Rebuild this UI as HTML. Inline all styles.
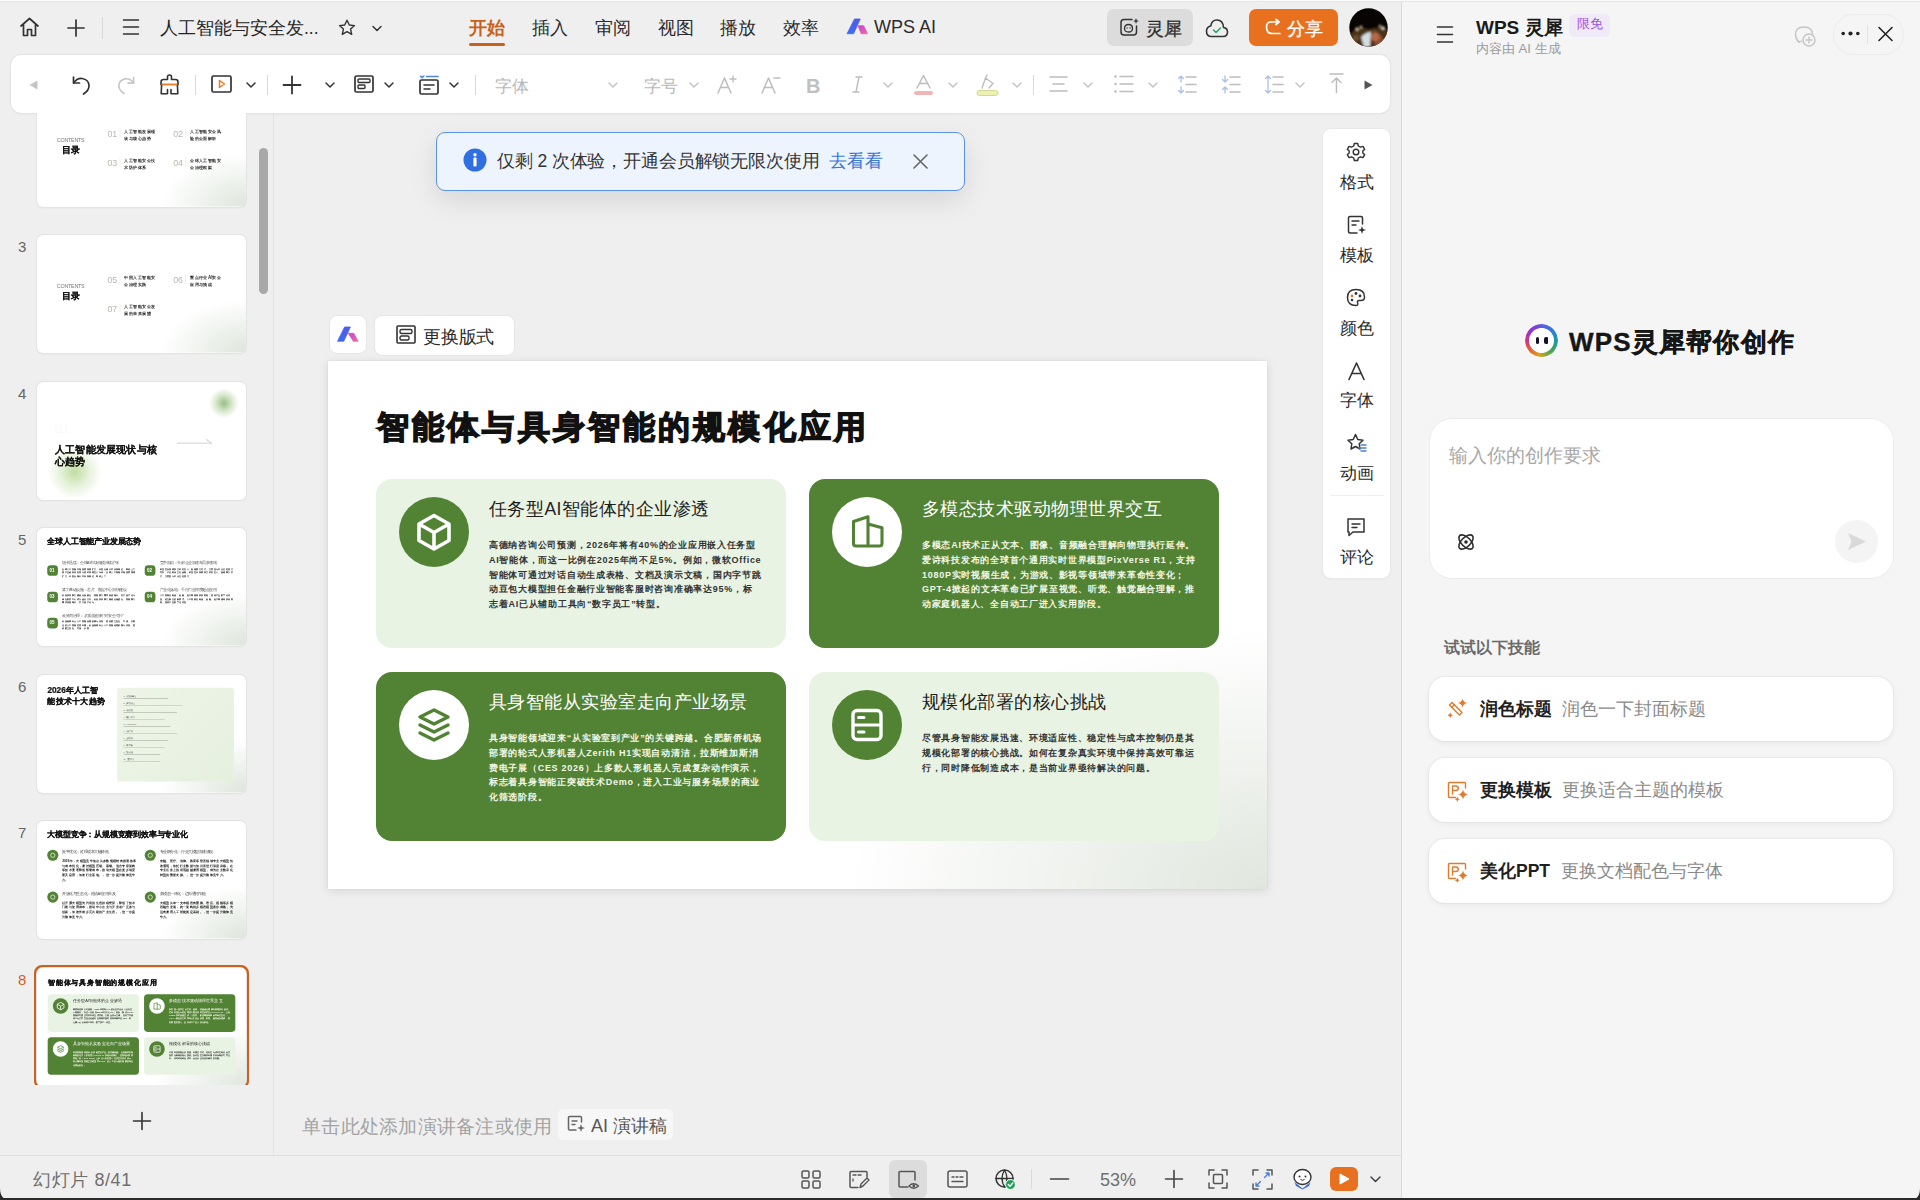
<!DOCTYPE html>
<html><head><meta charset="utf-8">
<style>
*{box-sizing:border-box;margin:0;padding:0}
html,body{width:1920px;height:1200px;overflow:hidden}
body{position:relative;background:#efefef;font-family:"Liberation Sans",sans-serif;color:#222}
.a{position:absolute}
svg{display:block;overflow:visible}
.ic{position:absolute;fill:none;stroke:#333;stroke-width:1.6;stroke-linecap:round;stroke-linejoin:round}
.t{position:absolute;white-space:nowrap;line-height:1}
</style></head><body>

<!-- top strip -->


<!-- toolbar bar -->
<div class="a" style="left:11px;top:55px;width:1379px;height:58px;background:#fff;border-radius:10px;box-shadow:0 0 0 1px #e4e4e4,0 1px 3px rgba(0,0,0,.06)"></div>

<!--THUMBS--><div class="a" style="left:0;top:113px;width:273px;height:972px;overflow:hidden">
<div class="a" style="left:37px;top:-24.5px;width:209px;height:118px;border-radius:6px;background:#fff;box-shadow:0 0 0 1px #e3e3e3,0 1px 2px rgba(0,0,0,.05);overflow:hidden"><div style="position:absolute;left:0;top:0;width:939px;height:528px;transform:scale(0.222577);transform-origin:0 0;font-family:'Liberation Sans',sans-serif"><div style="position:absolute;left:0;top:0;width:939px;height:528px;background:radial-gradient(ellipse 380px 240px at 100% 100%,rgba(200,212,196,.6),rgba(255,255,255,0) 100%)"></div>
<div style="position:absolute;left:89px;top:220px;white-space:nowrap;line-height:1;font-size:24px;color:#777;letter-spacing:-1px;font-weight:300">CONTENTS</div>
<div style="position:absolute;left:112px;top:252px;white-space:nowrap;line-height:1;font-size:40px;font-weight:900;color:#111;-webkit-text-stroke:1px #111">目录</div>
<div style="position:absolute;left:317px;top:183px;white-space:nowrap;line-height:1;font-size:40px;color:#b5b9ad;font-weight:300;letter-spacing:-1px">01</div>
<div style="position:absolute;left:372px;top:177px;width:2px;height:44px;background:#ddd"></div>
<div style="position:absolute;left:393px;top:181px;white-space:nowrap;line-height:1;font-size:20px;color:#222;font-weight:bold">人工智能发展现</div>
<div style="position:absolute;left:393px;top:214px;white-space:nowrap;line-height:1;font-size:20px;color:#222;font-weight:bold">状与核心趋势</div>
<div style="position:absolute;left:612px;top:183px;white-space:nowrap;line-height:1;font-size:40px;color:#b5b9ad;font-weight:300;letter-spacing:-1px">02</div>
<div style="position:absolute;left:667px;top:177px;width:2px;height:44px;background:#ddd"></div>
<div style="position:absolute;left:688px;top:181px;white-space:nowrap;line-height:1;font-size:20px;color:#222;font-weight:bold">人工智能安全风</div>
<div style="position:absolute;left:688px;top:214px;white-space:nowrap;line-height:1;font-size:20px;color:#222;font-weight:bold">险的全面解析</div>
<div style="position:absolute;left:317px;top:312px;white-space:nowrap;line-height:1;font-size:40px;color:#b5b9ad;font-weight:300;letter-spacing:-1px">03</div>
<div style="position:absolute;left:372px;top:306px;width:2px;height:44px;background:#ddd"></div>
<div style="position:absolute;left:393px;top:310px;white-space:nowrap;line-height:1;font-size:20px;color:#222;font-weight:bold">人工智能安全技</div>
<div style="position:absolute;left:393px;top:343px;white-space:nowrap;line-height:1;font-size:20px;color:#222;font-weight:bold">术防护体系</div>
<div style="position:absolute;left:612px;top:312px;white-space:nowrap;line-height:1;font-size:40px;color:#b5b9ad;font-weight:300;letter-spacing:-1px">04</div>
<div style="position:absolute;left:667px;top:306px;width:2px;height:44px;background:#ddd"></div>
<div style="position:absolute;left:688px;top:310px;white-space:nowrap;line-height:1;font-size:20px;color:#222;font-weight:bold">全球人工智能安</div>
<div style="position:absolute;left:688px;top:343px;white-space:nowrap;line-height:1;font-size:20px;color:#222;font-weight:bold">全治理框架</div></div></div>
<div class="t" style="left:18px;top:126.0px;font-size:15px;color:#666">3</div><div class="a" style="left:37px;top:122.0px;width:209px;height:118px;border-radius:6px;background:#fff;box-shadow:0 0 0 1px #e3e3e3,0 1px 2px rgba(0,0,0,.05);overflow:hidden"><div style="position:absolute;left:0;top:0;width:939px;height:528px;transform:scale(0.222577);transform-origin:0 0;font-family:'Liberation Sans',sans-serif"><div style="position:absolute;left:0;top:0;width:939px;height:528px;background:radial-gradient(ellipse 380px 240px at 100% 100%,rgba(200,212,196,.6),rgba(255,255,255,0) 100%)"></div>
<div style="position:absolute;left:89px;top:220px;white-space:nowrap;line-height:1;font-size:24px;color:#777;letter-spacing:-1px;font-weight:300">CONTENTS</div>
<div style="position:absolute;left:112px;top:252px;white-space:nowrap;line-height:1;font-size:40px;font-weight:900;color:#111;-webkit-text-stroke:1px #111">目录</div>
<div style="position:absolute;left:317px;top:183px;white-space:nowrap;line-height:1;font-size:40px;color:#b5b9ad;font-weight:300;letter-spacing:-1px">05</div>
<div style="position:absolute;left:372px;top:177px;width:2px;height:44px;background:#ddd"></div>
<div style="position:absolute;left:393px;top:181px;white-space:nowrap;line-height:1;font-size:20px;color:#222;font-weight:bold">中国人工智能安</div>
<div style="position:absolute;left:393px;top:214px;white-space:nowrap;line-height:1;font-size:20px;color:#222;font-weight:bold">全治理实践</div>
<div style="position:absolute;left:612px;top:183px;white-space:nowrap;line-height:1;font-size:40px;color:#b5b9ad;font-weight:300;letter-spacing:-1px">06</div>
<div style="position:absolute;left:667px;top:177px;width:2px;height:44px;background:#ddd"></div>
<div style="position:absolute;left:688px;top:181px;white-space:nowrap;line-height:1;font-size:20px;color:#222;font-weight:bold">重点行业AI安全</div>
<div style="position:absolute;left:688px;top:214px;white-space:nowrap;line-height:1;font-size:20px;color:#222;font-weight:bold">应用与挑战</div>
<div style="position:absolute;left:317px;top:312px;white-space:nowrap;line-height:1;font-size:40px;color:#b5b9ad;font-weight:300;letter-spacing:-1px">07</div>
<div style="position:absolute;left:372px;top:306px;width:2px;height:44px;background:#ddd"></div>
<div style="position:absolute;left:393px;top:310px;white-space:nowrap;line-height:1;font-size:20px;color:#222;font-weight:bold">人工智能安全发</div>
<div style="position:absolute;left:393px;top:343px;white-space:nowrap;line-height:1;font-size:20px;color:#222;font-weight:bold">展的未来展望</div></div></div>
<div class="t" style="left:18px;top:272.5px;font-size:15px;color:#666">4</div><div class="a" style="left:37px;top:268.5px;width:209px;height:118px;border-radius:6px;background:#fff;box-shadow:0 0 0 1px #e3e3e3,0 1px 2px rgba(0,0,0,.05);overflow:hidden"><div style="position:absolute;left:0;top:0;width:939px;height:528px;transform:scale(0.222577);transform-origin:0 0;font-family:'Liberation Sans',sans-serif"><div style="position:absolute;left:770px;top:30px;width:140px;height:130px;border-radius:50%;background:radial-gradient(circle,rgba(120,170,90,.75) 0,rgba(150,190,120,.35) 40%,rgba(255,255,255,0) 70%)"></div>
<div style="position:absolute;left:40px;top:290px;width:260px;height:230px;border-radius:50%;background:radial-gradient(circle,rgba(170,210,130,.75) 0,rgba(190,220,160,.35) 40%,rgba(255,255,255,0) 70%)"></div>
<div style="position:absolute;left:79px;top:180px;white-space:nowrap;line-height:1;font-size:60px;color:#fff;font-weight:300;-webkit-text-stroke:1px #eee">01</div>
<div style="position:absolute;left:80px;top:278px;white-space:nowrap;line-height:1;font-size:46px;font-weight:900;color:#111;-webkit-text-stroke:1px #111">人工智能发展现状与核</div>
<div style="position:absolute;left:80px;top:334px;white-space:nowrap;line-height:1;font-size:46px;font-weight:900;color:#111;-webkit-text-stroke:1px #111">心趋势</div>
<div style="position:absolute;left:628px;top:273px;width:158px;height:3px;background:#bbb"></div>
<div style="position:absolute;left:762px;top:256px;width:30px;height:3px;background:#bbb;transform:rotate(40deg);transform-origin:0 0"></div></div></div>
<div class="t" style="left:18px;top:419.0px;font-size:15px;color:#666">5</div><div class="a" style="left:37px;top:415.0px;width:209px;height:118px;border-radius:6px;background:#fff;box-shadow:0 0 0 1px #e3e3e3,0 1px 2px rgba(0,0,0,.05);overflow:hidden"><div style="position:absolute;left:0;top:0;width:939px;height:528px;transform:scale(0.222577);transform-origin:0 0;font-family:'Liberation Sans',sans-serif"><div style="position:absolute;left:0;top:0;width:939px;height:528px;background:radial-gradient(ellipse 380px 240px at 100% 100%,rgba(200,212,196,.6),rgba(255,255,255,0) 100%)"></div>
<div style="position:absolute;left:47px;top:43px;white-space:nowrap;line-height:1;font-size:35px;font-weight:900;color:#111;-webkit-text-stroke:1.2px #111">全球人工智能产业发展态势</div>
<div style="position:absolute;left:46px;top:167px;width:48px;height:48px;border-radius:15px;background:#528234"></div>
<div style="position:absolute;left:56px;top:180px;white-space:nowrap;line-height:1;font-size:20px;color:#fff;font-weight:bold">01</div>
<div style="position:absolute;left:113px;top:149px;white-space:nowrap;line-height:1;font-size:16px;color:#555">增长迅猛：全球AI市场规模持续扩张</div>
<div style="position:absolute;left:113px;top:177px;width:335px;font-size:11px;line-height:15px;color:#2a2a2a;font-weight:bold;white-space:normal;word-break:break-all">全球人工智能市场规模持续扩大，年复合增长率保持高位，带动上下游产业链协同发展与资本持续投入布局。全球人工智能市场规模持续扩大，年复合增长率保持高位，带动上下</div>
<div style="position:absolute;left:484px;top:167px;width:48px;height:48px;border-radius:15px;background:#528234"></div>
<div style="position:absolute;left:494px;top:180px;white-space:nowrap;line-height:1;font-size:20px;color:#fff;font-weight:bold">02</div>
<div style="position:absolute;left:551px;top:149px;white-space:nowrap;line-height:1;font-size:16px;color:#555">竞争加剧：头部企业加速布局多领域</div>
<div style="position:absolute;left:551px;top:177px;width:335px;font-size:11px;line-height:15px;color:#2a2a2a;font-weight:bold;white-space:normal;word-break:break-all">科技巨头持续加大研发投入，围绕算力芯片、大模型与应用生态展开竞争，产业格局正在重塑。科技巨头持续加大研发投入，围绕算力芯片、大模型与应用生态展开</div>
<div style="position:absolute;left:46px;top:286px;width:48px;height:48px;border-radius:15px;background:#528234"></div>
<div style="position:absolute;left:56px;top:299px;white-space:nowrap;line-height:1;font-size:20px;color:#fff;font-weight:bold">03</div>
<div style="position:absolute;left:113px;top:268px;white-space:nowrap;line-height:1;font-size:16px;color:#555">算力基础设施：芯片、数据中心加快建设</div>
<div style="position:absolute;left:113px;top:296px;width:335px;font-size:11px;line-height:15px;color:#2a2a2a;font-weight:bold;white-space:normal;word-break:break-all">各国加快算力基础设施建设，智能算力需求快速增长，芯片国产化与绿色数据中心成为重点方向。各国加快算力基础设施建设，智能算力需求快速增长，芯片国产化与</div>
<div style="position:absolute;left:484px;top:286px;width:48px;height:48px;border-radius:15px;background:#528234"></div>
<div style="position:absolute;left:494px;top:299px;white-space:nowrap;line-height:1;font-size:20px;color:#fff;font-weight:bold">04</div>
<div style="position:absolute;left:551px;top:268px;white-space:nowrap;line-height:1;font-size:16px;color:#555">产业化落地：千行百业深度融合应用</div>
<div style="position:absolute;left:551px;top:296px;width:335px;font-size:11px;line-height:15px;color:#2a2a2a;font-weight:bold;white-space:normal;word-break:break-all">人工智能在制造、金融、医疗等领域加快落地，推动产业数字化转型，催生新业态新模式。人工智能在制造、金融、医疗等领域加快落地，推动产业数字化转型</div>
<div style="position:absolute;left:46px;top:403px;width:48px;height:48px;border-radius:15px;background:#528234"></div>
<div style="position:absolute;left:56px;top:416px;white-space:nowrap;line-height:1;font-size:20px;color:#fff;font-weight:bold">05</div>
<div style="position:absolute;left:113px;top:385px;white-space:nowrap;line-height:1;font-size:16px;color:#555">政策与治理：从“鼓励创新”到“安全可控”</div>
<div style="position:absolute;left:113px;top:413px;width:335px;font-size:11px;line-height:15px;color:#2a2a2a;font-weight:bold;white-space:normal;word-break:break-all">各国陆续出台人工智能治理政策与法规，推动建立安全、可信、负责任的人工智能发展环境。各国陆续出台人工智能治理政策与法规，推动建立安全、可信、负责</div></div></div>
<div class="t" style="left:18px;top:565.5px;font-size:15px;color:#666">6</div><div class="a" style="left:37px;top:561.5px;width:209px;height:118px;border-radius:6px;background:#fff;box-shadow:0 0 0 1px #e3e3e3,0 1px 2px rgba(0,0,0,.05);overflow:hidden"><div style="position:absolute;left:0;top:0;width:939px;height:528px;transform:scale(0.222577);transform-origin:0 0;font-family:'Liberation Sans',sans-serif"><div style="position:absolute;left:0;top:0;width:939px;height:528px;background:radial-gradient(ellipse 380px 240px at 100% 100%,rgba(200,212,196,.6),rgba(255,255,255,0) 100%)"></div>
<div style="position:absolute;left:47px;top:50px;white-space:nowrap;line-height:1;font-size:37px;font-weight:900;color:#111;-webkit-text-stroke:1.1px #111">2026年人工智</div>
<div style="position:absolute;left:47px;top:98px;white-space:nowrap;line-height:1;font-size:37px;font-weight:900;color:#111;-webkit-text-stroke:1.1px #111">能技术十大趋势</div>
<div style="position:absolute;left:360px;top:57px;width:525px;height:422px;border-radius:14px;background:linear-gradient(135deg,#eef5e8,#e6f0df)"></div>
<div style="position:absolute;left:389px;top:92.0px;white-space:nowrap;line-height:1;font-size:8px;color:#555">1. AI智能体爆发</div>
<div style="position:absolute;left:389px;top:104.0px;width:200px;height:2.5px;background:#666;opacity:.45"></div>
<div style="position:absolute;left:389px;top:123.5px;white-space:nowrap;line-height:1;font-size:8px;color:#555">2. 多模态融合</div>
<div style="position:absolute;left:389px;top:135.5px;width:265px;height:2.5px;background:#666;opacity:.45"></div>
<div style="position:absolute;left:389px;top:155.0px;white-space:nowrap;line-height:1;font-size:8px;color:#555">3. 具身智能</div>
<div style="position:absolute;left:389px;top:167.0px;width:240px;height:2.5px;background:#666;opacity:.45"></div>
<div style="position:absolute;left:389px;top:186.5px;white-space:nowrap;line-height:1;font-size:8px;color:#555">4. 端侧大模型</div>
<div style="position:absolute;left:389px;top:198.5px;width:185px;height:2.5px;background:#666;opacity:.45"></div>
<div style="position:absolute;left:389px;top:218.0px;white-space:nowrap;line-height:1;font-size:8px;color:#555">5. AI for Science</div>
<div style="position:absolute;left:389px;top:230.0px;width:210px;height:2.5px;background:#666;opacity:.45"></div>
<div style="position:absolute;left:389px;top:249.5px;white-space:nowrap;line-height:1;font-size:8px;color:#555">6. 开源生态</div>
<div style="position:absolute;left:389px;top:261.5px;width:240px;height:2.5px;background:#666;opacity:.45"></div>
<div style="position:absolute;left:389px;top:281.0px;white-space:nowrap;line-height:1;font-size:8px;color:#555">7. 合成数据</div>
<div style="position:absolute;left:389px;top:293.0px;width:200px;height:2.5px;background:#666;opacity:.45"></div>
<div style="position:absolute;left:389px;top:312.5px;white-space:nowrap;line-height:1;font-size:8px;color:#555">8. 算力革新</div>
<div style="position:absolute;left:389px;top:324.5px;width:185px;height:2.5px;background:#666;opacity:.45"></div>
<div style="position:absolute;left:389px;top:344.0px;white-space:nowrap;line-height:1;font-size:8px;color:#555">9. 安全治理</div>
<div style="position:absolute;left:389px;top:356.0px;width:165px;height:2.5px;background:#666;opacity:.45"></div>
<div style="position:absolute;left:389px;top:375.5px;white-space:nowrap;line-height:1;font-size:8px;color:#555">10. 普惠应用</div>
<div style="position:absolute;left:389px;top:387.5px;width:165px;height:2.5px;background:#666;opacity:.45"></div></div></div>
<div class="t" style="left:18px;top:712.0px;font-size:15px;color:#666">7</div><div class="a" style="left:37px;top:708.0px;width:209px;height:118px;border-radius:6px;background:#fff;box-shadow:0 0 0 1px #e3e3e3,0 1px 2px rgba(0,0,0,.05);overflow:hidden"><div style="position:absolute;left:0;top:0;width:939px;height:528px;transform:scale(0.222577);transform-origin:0 0;font-family:'Liberation Sans',sans-serif"><div style="position:absolute;left:0;top:0;width:939px;height:528px;background:radial-gradient(ellipse 380px 240px at 100% 100%,rgba(200,212,196,.6),rgba(255,255,255,0) 100%)"></div>
<div style="position:absolute;left:47px;top:40px;white-space:nowrap;line-height:1;font-size:35px;font-weight:900;color:#111;-webkit-text-stroke:1.2px #111">大模型竞争：从规模竞赛到效率与专业化</div>
<div style="position:absolute;left:46px;top:129px;width:50px;height:50px;border-radius:50%;background:#528234"></div>
<div style="position:absolute;left:60px;top:143px;width:22px;height:22px;border-radius:50%;border:3px solid #fff"></div>
<div style="position:absolute;left:113px;top:130px;white-space:nowrap;line-height:1;font-size:16px;color:#444">效率优化：推理成本大幅降低</div>
<div style="position:absolute;left:113px;top:167px;width:335px;font-size:15px;line-height:21.5px;color:#222;white-space:normal;word-break:break-all;font-weight:bold">2026年，大模型竞争焦点从参数规模转向推理效率与成本优化，通过模型压缩、蒸馏、混合专家架构等技术显著降低部署成本，推动大模型在更多场景普及应用，加速行业落地。，进一步提升整体竞争力。</div>
<div style="position:absolute;left:484px;top:129px;width:50px;height:50px;border-radius:50%;background:#528234"></div>
<div style="position:absolute;left:498px;top:143px;width:22px;height:22px;border-radius:50%;border:3px solid #fff"></div>
<div style="position:absolute;left:551px;top:130px;white-space:nowrap;line-height:1;font-size:16px;color:#444">专业细分化：行业大模型加速涌现</div>
<div style="position:absolute;left:551px;top:167px;width:335px;font-size:15px;line-height:21.5px;color:#222;white-space:normal;word-break:break-all;font-weight:bold">金融、医疗、法律、教育等垂直领域专业大模型快速涌现，依托行业数据与知识库进行深度训练，在专业任务上的表现超越通用模型，成为企业数字化转型的重要支撑。，进一步提升整体竞争力。</div>
<div style="position:absolute;left:46px;top:317px;width:50px;height:50px;border-radius:50%;background:#528234"></div>
<div style="position:absolute;left:60px;top:331px;width:22px;height:22px;border-radius:50%;border:3px solid #fff"></div>
<div style="position:absolute;left:113px;top:318px;white-space:nowrap;line-height:1;font-size:16px;color:#444">开源化与生态化：推动AI应用普及</div>
<div style="position:absolute;left:113px;top:355px;width:335px;font-size:15px;line-height:21.5px;color:#222;white-space:normal;word-break:break-all;font-weight:bold">以开源大模型为代表的生态持续繁荣，降低了技术门槛与使用成本，推动中小企业与开发者广泛参与创新，加速形成多元共建的产业生态。，进一步提升整体竞争力。</div>
<div style="position:absolute;left:484px;top:317px;width:50px;height:50px;border-radius:50%;background:#528234"></div>
<div style="position:absolute;left:498px;top:331px;width:22px;height:22px;border-radius:50%;border:3px solid #fff"></div>
<div style="position:absolute;left:551px;top:318px;white-space:nowrap;line-height:1;font-size:16px;color:#444">多模态一体化：迈向通用智能</div>
<div style="position:absolute;left:551px;top:355px;width:335px;font-size:15px;line-height:21.5px;color:#222;white-space:normal;word-break:break-all;font-weight:bold">大模型从单一文本模态向图像、语音、视频等多模态融合发展，统一架构的多模态模型逐步成熟，为迈向通用人工智能奠定基础。，进一步提升整体竞争力。</div></div></div>
<div class="a" style="left:34px;top:851.5px;width:215px;height:124px;border-radius:8px;border:3px solid #c9611f"></div>
<div class="t" style="left:18px;top:858.5px;font-size:15px;color:#d0611c">8</div><div class="a" style="left:37px;top:854.5px;width:209px;height:118px;border-radius:6px;background:#fff;box-shadow:0 0 0 1px #e3e3e3,0 1px 2px rgba(0,0,0,.05);overflow:hidden"><div style="position:absolute;left:0;top:0;width:939px;height:528px;transform:scale(0.222577);transform-origin:0 0;font-family:'Liberation Sans',sans-serif"><div style="position:absolute;left:0;top:0;width:939px;height:528px;background:radial-gradient(ellipse 420px 260px at 100% 100%,rgba(200,210,195,.55),rgba(255,255,255,0) 100%),#fff"></div>
<div style="position:absolute;left:49px;top:49.5px;font-size:32px;letter-spacing:3.15px;line-height:1;font-weight:900;color:#111;-webkit-text-stroke:1.4px #111;white-space:nowrap">智能体与具身智能的规模化应用</div>
<div style="position:absolute;left:48px;top:118px;width:410px;height:169px;border-radius:16px;background:#e9f3e3;overflow:hidden">
<div style="position:absolute;left:23px;top:18px;width:70px;height:70px;border-radius:50%;background:#528234"></div>
<svg width="40" height="40" viewBox="0 0 40 40" style="position:absolute;left:38px;top:33px"><path d="M20 3.5 L35 12 V28.5 L20 37 L5 28.5 V12 Z M5 12 L20 20.5 L35 12 M20 20.5 V37" fill="none" stroke="#fff" stroke-width="3.6" stroke-linejoin="round"/></svg>
<div style="position:absolute;left:113px;top:22px;font-size:17.5px;letter-spacing:0.46px;line-height:1;color:#1e1e1e;white-space:nowrap">任务型AI智能体的企业渗透</div>
<div style="position:absolute;left:113px;top:59.0px;line-height:14.75px;font-size:9px;letter-spacing:0.73px;color:#333;font-weight:bold;white-space:nowrap">高德纳咨询公司预测，2026年将有40%的企业应用嵌入任务型</div>
<div style="position:absolute;left:113px;top:73.8px;line-height:14.75px;font-size:9px;letter-spacing:0.73px;color:#333;font-weight:bold;white-space:nowrap">AI智能体，而这一比例在2025年尚不足5%。例如，微软Office</div>
<div style="position:absolute;left:113px;top:88.5px;line-height:14.75px;font-size:9px;letter-spacing:0.73px;color:#333;font-weight:bold;white-space:nowrap">智能体可通过对话自动生成表格、文档及演示文稿，国内字节跳</div>
<div style="position:absolute;left:113px;top:103.2px;line-height:14.75px;font-size:9px;letter-spacing:0.73px;color:#333;font-weight:bold;white-space:nowrap">动豆包大模型担任金融行业智能客服时咨询准确率达95%，标</div>
<div style="position:absolute;left:113px;top:118.0px;line-height:14.75px;font-size:9px;letter-spacing:0.73px;color:#333;font-weight:bold;white-space:nowrap">志着AI已从辅助工具向“数字员工”转型。</div>
</div>
<div style="position:absolute;left:481px;top:118px;width:410px;height:169px;border-radius:16px;background:#528234;overflow:hidden">
<div style="position:absolute;left:23px;top:18px;width:70px;height:70px;border-radius:50%;background:#fff"></div>
<svg width="40" height="40" viewBox="0 0 40 40" style="position:absolute;left:38px;top:33px"><path d="M6.5 31.5 V9.5 L21 4.8 V34 M21 12 L35 15.8 V31.5 Q35 34 32.5 34 H9 Q6.5 34 6.5 31.5" fill="none" stroke="#528234" stroke-width="3.1" stroke-linejoin="round" stroke-linecap="round"/></svg>
<div style="position:absolute;left:113px;top:22px;font-size:17.5px;letter-spacing:0.46px;line-height:1;color:#fff;white-space:nowrap">多模态技术驱动物理世界交互</div>
<div style="position:absolute;left:113px;top:59.0px;line-height:14.75px;font-size:9px;letter-spacing:0.73px;color:#f3f7e6;font-weight:bold;white-space:nowrap">多模态AI技术正从文本、图像、音频融合理解向物理执行延伸。</div>
<div style="position:absolute;left:113px;top:73.8px;line-height:14.75px;font-size:9px;letter-spacing:0.73px;color:#f3f7e6;font-weight:bold;white-space:nowrap">爱诗科技发布的全球首个通用实时世界模型PixVerse R1，支持</div>
<div style="position:absolute;left:113px;top:88.5px;line-height:14.75px;font-size:9px;letter-spacing:0.73px;color:#f3f7e6;font-weight:bold;white-space:nowrap">1080P实时视频生成，为游戏、影视等领域带来革命性变化；</div>
<div style="position:absolute;left:113px;top:103.2px;line-height:14.75px;font-size:9px;letter-spacing:0.73px;color:#f3f7e6;font-weight:bold;white-space:nowrap">GPT-4掀起的文本革命已扩展至视觉、听觉、触觉融合理解，推</div>
<div style="position:absolute;left:113px;top:118.0px;line-height:14.75px;font-size:9px;letter-spacing:0.73px;color:#f3f7e6;font-weight:bold;white-space:nowrap">动家庭机器人、全自动工厂进入实用阶段。</div>
</div>
<div style="position:absolute;left:48px;top:311px;width:410px;height:169px;border-radius:16px;background:#528234;overflow:hidden">
<div style="position:absolute;left:23px;top:18px;width:70px;height:70px;border-radius:50%;background:#fff"></div>
<svg width="40" height="40" viewBox="0 0 40 40" style="position:absolute;left:38px;top:33px"><path d="M20 5 L34 12 L20 19 L6 12 Z" fill="none" stroke="#528234" stroke-width="3.4" stroke-linejoin="round"/><path d="M6 20 L20 27 L34 20 M6 28 L20 35 L34 28" fill="none" stroke="#528234" stroke-width="3.4" stroke-linejoin="round" stroke-linecap="round"/></svg>
<div style="position:absolute;left:113px;top:22px;font-size:17.5px;letter-spacing:0.46px;line-height:1;color:#fff;white-space:nowrap">具身智能从实验室走向产业场景</div>
<div style="position:absolute;left:113px;top:59.0px;line-height:14.75px;font-size:9px;letter-spacing:0.73px;color:#f3f7e6;font-weight:bold;white-space:nowrap">具身智能领域迎来“从实验室到产业”的关键跨越。合肥新侨机场</div>
<div style="position:absolute;left:113px;top:73.8px;line-height:14.75px;font-size:9px;letter-spacing:0.73px;color:#f3f7e6;font-weight:bold;white-space:nowrap">部署的轮式人形机器人Zerith H1实现自动清洁，拉斯维加斯消</div>
<div style="position:absolute;left:113px;top:88.5px;line-height:14.75px;font-size:9px;letter-spacing:0.73px;color:#f3f7e6;font-weight:bold;white-space:nowrap">费电子展（CES 2026）上多款人形机器人完成复杂动作演示，</div>
<div style="position:absolute;left:113px;top:103.2px;line-height:14.75px;font-size:9px;letter-spacing:0.73px;color:#f3f7e6;font-weight:bold;white-space:nowrap">标志着具身智能正突破技术Demo，进入工业与服务场景的商业</div>
<div style="position:absolute;left:113px;top:118.0px;line-height:14.75px;font-size:9px;letter-spacing:0.73px;color:#f3f7e6;font-weight:bold;white-space:nowrap">化筛选阶段。</div>
</div>
<div style="position:absolute;left:481px;top:311px;width:410px;height:169px;border-radius:16px;background:#e9f3e3;overflow:hidden">
<div style="position:absolute;left:23px;top:18px;width:70px;height:70px;border-radius:50%;background:#528234"></div>
<svg width="40" height="40" viewBox="0 0 40 40" style="position:absolute;left:38px;top:33px"><rect x="6" y="5.5" width="28" height="29" rx="4" fill="none" stroke="#fff" stroke-width="3.4"/><path d="M6 20 H34" stroke="#fff" stroke-width="3.2"/><path d="M11.5 12.5 H17 M11.5 27 H17" stroke="#fff" stroke-width="3" stroke-linecap="round"/></svg>
<div style="position:absolute;left:113px;top:22px;font-size:17.5px;letter-spacing:0.46px;line-height:1;color:#1e1e1e;white-space:nowrap">规模化部署的核心挑战</div>
<div style="position:absolute;left:113px;top:59.0px;line-height:14.75px;font-size:9px;letter-spacing:0.73px;color:#333;font-weight:bold;white-space:nowrap">尽管具身智能发展迅速、环境适应性、稳定性与成本控制仍是其</div>
<div style="position:absolute;left:113px;top:73.8px;line-height:14.75px;font-size:9px;letter-spacing:0.73px;color:#333;font-weight:bold;white-space:nowrap">规模化部署的核心挑战。如何在复杂真实环境中保持高效可靠运</div>
<div style="position:absolute;left:113px;top:88.5px;line-height:14.75px;font-size:9px;letter-spacing:0.73px;color:#333;font-weight:bold;white-space:nowrap">行，同时降低制造成本，是当前业界亟待解决的问题。</div>
</div></div></div>
</div><!--/THUMBS-->
<!-- left panel divider -->
<div class="a" style="left:273px;top:113px;width:1px;height:1042px;background:#e2e2e2"></div>
<!-- scrollbar -->
<div class="a" style="left:259px;top:148px;width:9px;height:146px;background:#a8a8a8;border-radius:5px"></div>

<!-- bottom divider -->
<div class="a" style="left:0;top:1155px;width:1401px;height:1px;background:#e0e0e0"></div>

<!-- right panel -->
<div class="a" style="left:1401px;top:0;width:519px;height:1200px;background:#f5f5f5;border-left:1px solid #d9d9d9"></div>

<!-- slide -->
<div class="a" style="left:328px;top:361px;width:939px;height:528px;background:#fff;box-shadow:0 2px 10px rgba(0,0,0,.10),0 0 1px rgba(0,0,0,.15);overflow:hidden">
<!--SLIDE--><div style="position:absolute;left:0;top:0;width:939px;height:528px;background:radial-gradient(ellipse 420px 260px at 100% 100%,rgba(200,210,195,.55),rgba(255,255,255,0) 100%),#fff"></div>
<div style="position:absolute;left:49px;top:49.5px;font-size:32px;letter-spacing:3.15px;line-height:1;font-weight:900;color:#111;-webkit-text-stroke:1.4px #111;white-space:nowrap">智能体与具身智能的规模化应用</div>
<div style="position:absolute;left:48px;top:118px;width:410px;height:169px;border-radius:16px;background:#e9f3e3;overflow:hidden">
<div style="position:absolute;left:23px;top:18px;width:70px;height:70px;border-radius:50%;background:#528234"></div>
<svg width="40" height="40" viewBox="0 0 40 40" style="position:absolute;left:38px;top:33px"><path d="M20 3.5 L35 12 V28.5 L20 37 L5 28.5 V12 Z M5 12 L20 20.5 L35 12 M20 20.5 V37" fill="none" stroke="#fff" stroke-width="3.6" stroke-linejoin="round"/></svg>
<div style="position:absolute;left:113px;top:22px;font-size:17.5px;letter-spacing:0.46px;line-height:1;color:#1e1e1e;white-space:nowrap">任务型AI智能体的企业渗透</div>
<div style="position:absolute;left:113px;top:59.0px;line-height:14.75px;font-size:9px;letter-spacing:0.73px;color:#333;font-weight:bold;white-space:nowrap">高德纳咨询公司预测，2026年将有40%的企业应用嵌入任务型</div>
<div style="position:absolute;left:113px;top:73.8px;line-height:14.75px;font-size:9px;letter-spacing:0.73px;color:#333;font-weight:bold;white-space:nowrap">AI智能体，而这一比例在2025年尚不足5%。例如，微软Office</div>
<div style="position:absolute;left:113px;top:88.5px;line-height:14.75px;font-size:9px;letter-spacing:0.73px;color:#333;font-weight:bold;white-space:nowrap">智能体可通过对话自动生成表格、文档及演示文稿，国内字节跳</div>
<div style="position:absolute;left:113px;top:103.2px;line-height:14.75px;font-size:9px;letter-spacing:0.73px;color:#333;font-weight:bold;white-space:nowrap">动豆包大模型担任金融行业智能客服时咨询准确率达95%，标</div>
<div style="position:absolute;left:113px;top:118.0px;line-height:14.75px;font-size:9px;letter-spacing:0.73px;color:#333;font-weight:bold;white-space:nowrap">志着AI已从辅助工具向“数字员工”转型。</div>
</div>
<div style="position:absolute;left:481px;top:118px;width:410px;height:169px;border-radius:16px;background:#528234;overflow:hidden">
<div style="position:absolute;left:23px;top:18px;width:70px;height:70px;border-radius:50%;background:#fff"></div>
<svg width="40" height="40" viewBox="0 0 40 40" style="position:absolute;left:38px;top:33px"><path d="M6.5 31.5 V9.5 L21 4.8 V34 M21 12 L35 15.8 V31.5 Q35 34 32.5 34 H9 Q6.5 34 6.5 31.5" fill="none" stroke="#528234" stroke-width="3.1" stroke-linejoin="round" stroke-linecap="round"/></svg>
<div style="position:absolute;left:113px;top:22px;font-size:17.5px;letter-spacing:0.46px;line-height:1;color:#fff;white-space:nowrap">多模态技术驱动物理世界交互</div>
<div style="position:absolute;left:113px;top:59.0px;line-height:14.75px;font-size:9px;letter-spacing:0.73px;color:#f3f7e6;font-weight:bold;white-space:nowrap">多模态AI技术正从文本、图像、音频融合理解向物理执行延伸。</div>
<div style="position:absolute;left:113px;top:73.8px;line-height:14.75px;font-size:9px;letter-spacing:0.73px;color:#f3f7e6;font-weight:bold;white-space:nowrap">爱诗科技发布的全球首个通用实时世界模型PixVerse R1，支持</div>
<div style="position:absolute;left:113px;top:88.5px;line-height:14.75px;font-size:9px;letter-spacing:0.73px;color:#f3f7e6;font-weight:bold;white-space:nowrap">1080P实时视频生成，为游戏、影视等领域带来革命性变化；</div>
<div style="position:absolute;left:113px;top:103.2px;line-height:14.75px;font-size:9px;letter-spacing:0.73px;color:#f3f7e6;font-weight:bold;white-space:nowrap">GPT-4掀起的文本革命已扩展至视觉、听觉、触觉融合理解，推</div>
<div style="position:absolute;left:113px;top:118.0px;line-height:14.75px;font-size:9px;letter-spacing:0.73px;color:#f3f7e6;font-weight:bold;white-space:nowrap">动家庭机器人、全自动工厂进入实用阶段。</div>
</div>
<div style="position:absolute;left:48px;top:311px;width:410px;height:169px;border-radius:16px;background:#528234;overflow:hidden">
<div style="position:absolute;left:23px;top:18px;width:70px;height:70px;border-radius:50%;background:#fff"></div>
<svg width="40" height="40" viewBox="0 0 40 40" style="position:absolute;left:38px;top:33px"><path d="M20 5 L34 12 L20 19 L6 12 Z" fill="none" stroke="#528234" stroke-width="3.4" stroke-linejoin="round"/><path d="M6 20 L20 27 L34 20 M6 28 L20 35 L34 28" fill="none" stroke="#528234" stroke-width="3.4" stroke-linejoin="round" stroke-linecap="round"/></svg>
<div style="position:absolute;left:113px;top:22px;font-size:17.5px;letter-spacing:0.46px;line-height:1;color:#fff;white-space:nowrap">具身智能从实验室走向产业场景</div>
<div style="position:absolute;left:113px;top:59.0px;line-height:14.75px;font-size:9px;letter-spacing:0.73px;color:#f3f7e6;font-weight:bold;white-space:nowrap">具身智能领域迎来“从实验室到产业”的关键跨越。合肥新侨机场</div>
<div style="position:absolute;left:113px;top:73.8px;line-height:14.75px;font-size:9px;letter-spacing:0.73px;color:#f3f7e6;font-weight:bold;white-space:nowrap">部署的轮式人形机器人Zerith H1实现自动清洁，拉斯维加斯消</div>
<div style="position:absolute;left:113px;top:88.5px;line-height:14.75px;font-size:9px;letter-spacing:0.73px;color:#f3f7e6;font-weight:bold;white-space:nowrap">费电子展（CES 2026）上多款人形机器人完成复杂动作演示，</div>
<div style="position:absolute;left:113px;top:103.2px;line-height:14.75px;font-size:9px;letter-spacing:0.73px;color:#f3f7e6;font-weight:bold;white-space:nowrap">标志着具身智能正突破技术Demo，进入工业与服务场景的商业</div>
<div style="position:absolute;left:113px;top:118.0px;line-height:14.75px;font-size:9px;letter-spacing:0.73px;color:#f3f7e6;font-weight:bold;white-space:nowrap">化筛选阶段。</div>
</div>
<div style="position:absolute;left:481px;top:311px;width:410px;height:169px;border-radius:16px;background:#e9f3e3;overflow:hidden">
<div style="position:absolute;left:23px;top:18px;width:70px;height:70px;border-radius:50%;background:#528234"></div>
<svg width="40" height="40" viewBox="0 0 40 40" style="position:absolute;left:38px;top:33px"><rect x="6" y="5.5" width="28" height="29" rx="4" fill="none" stroke="#fff" stroke-width="3.4"/><path d="M6 20 H34" stroke="#fff" stroke-width="3.2"/><path d="M11.5 12.5 H17 M11.5 27 H17" stroke="#fff" stroke-width="3" stroke-linecap="round"/></svg>
<div style="position:absolute;left:113px;top:22px;font-size:17.5px;letter-spacing:0.46px;line-height:1;color:#1e1e1e;white-space:nowrap">规模化部署的核心挑战</div>
<div style="position:absolute;left:113px;top:59.0px;line-height:14.75px;font-size:9px;letter-spacing:0.73px;color:#333;font-weight:bold;white-space:nowrap">尽管具身智能发展迅速、环境适应性、稳定性与成本控制仍是其</div>
<div style="position:absolute;left:113px;top:73.8px;line-height:14.75px;font-size:9px;letter-spacing:0.73px;color:#333;font-weight:bold;white-space:nowrap">规模化部署的核心挑战。如何在复杂真实环境中保持高效可靠运</div>
<div style="position:absolute;left:113px;top:88.5px;line-height:14.75px;font-size:9px;letter-spacing:0.73px;color:#333;font-weight:bold;white-space:nowrap">行，同时降低制造成本，是当前业界亟待解决的问题。</div>
</div>
<!--/SLIDE-->
</div>


<!-- ===== TITLE BAR ===== -->
<svg class="ic" style="left:19px;top:17px;width:21px;height:20px" viewBox="0 0 21 20"><path d="M2 9 L10.5 1.5 L19 9 M4.5 7 V18.5 H8.5 V12.5 H12.5 V18.5 H16.5 V7" stroke="#333" stroke-width="1.7"/></svg>
<svg class="ic" style="left:67px;top:19px;width:18px;height:18px" viewBox="0 0 18 18"><path d="M9 1 V17 M1 9 H17" stroke-width="1.7"/></svg>
<div class="a" style="left:102px;top:17px;width:1px;height:22px;background:#d6d6d6"></div>
<svg class="ic" style="left:123px;top:19px;width:16px;height:16px" viewBox="0 0 16 16"><path d="M0.5 1 H15.5 M0.5 8 H15.5 M0.5 15 H15.5" stroke-width="1.5"/></svg>
<div class="t" style="left:160px;top:20px;font-size:17.5px;color:#262626;letter-spacing:0">人工智能与安全发...</div>
<svg class="ic" style="left:338px;top:19px;width:18px;height:17px" viewBox="0 0 18 17"><path d="M9 1.2 L11.3 6 L16.5 6.6 L12.6 10.1 L13.7 15.4 L9 12.7 L4.3 15.4 L5.4 10.1 L1.5 6.6 L6.7 6 Z" stroke-width="1.4"/></svg>
<svg class="ic" style="left:372px;top:25px;width:10px;height:7px" viewBox="0 0 10 7"><path d="M1 1.5 L5 5.5 L9 1.5" stroke-width="1.5"/></svg>

<div class="t" style="left:469px;top:18.5px;font-size:18px;color:#c8611c;font-weight:bold">开始</div>
<div class="a" style="left:469px;top:43px;width:36px;height:3px;border-radius:2px;background:#c8611c"></div>
<div class="t" style="left:532px;top:18.5px;font-size:18px;color:#2b2b2b">插入</div>
<div class="t" style="left:595px;top:18.5px;font-size:18px;color:#2b2b2b">审阅</div>
<div class="t" style="left:658px;top:18.5px;font-size:18px;color:#2b2b2b">视图</div>
<div class="t" style="left:720px;top:18.5px;font-size:18px;color:#2b2b2b">播放</div>
<div class="t" style="left:783px;top:18.5px;font-size:18px;color:#2b2b2b">效率</div>
<svg class="a" style="left:846px;top:18px;width:22px;height:17px" viewBox="0 0 22 17"><defs><linearGradient id="wg1" x1="0" y1="1" x2="1" y2="0"><stop offset="0" stop-color="#3d6cf5"/><stop offset="1" stop-color="#4f59e8"/></linearGradient><linearGradient id="wg2" x1="0" y1="0" x2="1" y2="1"><stop offset="0" stop-color="#c546d6"/><stop offset="1" stop-color="#f06a9a"/></linearGradient></defs><path d="M1 15.75 L8.5 1 H14.25 L7.5 15.75 Z" fill="url(#wg1)" stroke="url(#wg1)" stroke-width=".8" stroke-linejoin="round"/><path d="M12 7.75 H17.75 L21.5 15.75 H15.25 Z" fill="url(#wg2)" stroke="url(#wg2)" stroke-width=".8" stroke-linejoin="round"/></svg>
<div class="t" style="left:874px;top:18px;font-size:18px;color:#2b2b2b">WPS AI</div>

<div class="a" style="left:1107px;top:9px;width:86px;height:37px;border-radius:7px;background:#dcdcdc"></div>
<svg class="ic" style="left:1119px;top:17px;width:21px;height:20px" viewBox="0 0 21 20"><path d="M13 2.5 H5 Q2 2.5 2 5.5 V15 Q2 18 5 18 H14.5 Q17.5 18 17.5 15 V9" stroke-width="1.5"/><path d="M5.5 11.5 Q5.5 7.5 9.5 7.5 Q13.5 7.5 13.5 11.5 Q13.5 15 9.5 15 Q5.5 15 5.5 11.5 Z" stroke-width="1.3"/><circle cx="8" cy="11" r=".7" fill="#333" stroke="none"/><circle cx="11" cy="11" r=".7" fill="#333" stroke="none"/><path d="M17 1 L17.8 3.3 L20 4 L17.8 4.7 L17 7 L16.2 4.7 L14 4 L16.2 3.3 Z" fill="#333" stroke="none"/></svg>
<div class="t" style="left:1146px;top:19.5px;font-size:18px;color:#2b2b2b;-webkit-text-stroke:0.3px #2b2b2b">灵犀</div>
<svg class="ic" style="left:1205px;top:18px;width:24px;height:20px" viewBox="0 0 24 20"><path d="M6.5 18.5 H18 Q22.5 18.5 22.5 14 Q22.5 10 18.5 9.5 Q18 2 12 2 Q6.5 2 5.8 8 Q1.5 8.8 1.5 13.3 Q1.5 18.5 6.5 18.5 Z" stroke-width="1.6"/><path d="M8.5 12 L11 14.5 L15.5 10" stroke="#2ba86a" stroke-width="1.6"/></svg>
<div class="a" style="left:1249px;top:9px;width:89px;height:37px;border-radius:7px;background:#e8711f"></div>
<svg class="ic" style="left:1265px;top:19px;width:17px;height:16px" viewBox="0 0 17 16"><path d="M13 3 H6 Q1.5 3 1.5 8 Q1.5 14.5 7 14.5 H15" stroke="#fff" stroke-width="1.7"/><path d="M11 0.5 L14 3 L11 5.5" stroke="#fff" stroke-width="1.7"/></svg>
<div class="t" style="left:1287px;top:19.5px;font-size:18px;color:#fff;-webkit-text-stroke:0.3px #fff">分享</div>
<svg class="a" style="left:1349px;top:8px;width:39px;height:39px" viewBox="0 0 39 39"><defs><clipPath id="avc"><circle cx="19.5" cy="19.5" r="19.2"/></clipPath><filter id="avb" x="-20%" y="-20%" width="140%" height="140%"><feGaussianBlur stdDeviation="1.1"/></filter></defs><g clip-path="url(#avc)"><rect width="39" height="39" fill="#070403"/><g filter="url(#avb)"><path d="M0 26 Q10 18 20 21 Q30 18 39 22 V39 H0 Z" fill="#4a3018"/><path d="M24 22 Q32 24 36 36 L26 39 Z" fill="#8a5030"/><circle cx="26" cy="29" r="4" fill="#b8684a"/><path d="M12 29 Q17 24 22 24 L21 39 H15 Z" fill="#d4dde0"/><circle cx="8" cy="21" r="1.8" fill="#d8c8a0"/><circle cx="12" cy="19" r="1.5" fill="#c8b890"/><circle cx="34" cy="20" r="1.8" fill="#e8dcd0"/><circle cx="31" cy="18" r="1.3" fill="#d8c8b0"/><circle cx="7" cy="30" r="3" fill="#6a5030"/></g></g></svg>


<!-- ===== TOOLBAR ICONS ===== -->
<svg class="a" style="left:29px;top:80px;width:9px;height:10px" viewBox="0 0 9 10"><path d="M8.5 0.5 V9.5 L0.5 5 Z" fill="#c4c4c4"/></svg>
<svg class="ic" style="left:72px;top:75px;width:19px;height:20px" viewBox="0 0 19 20"><path d="M1.5 2 V8 H7.5" stroke-width="1.7"/><path d="M1.8 7.8 Q5 3 10 3.5 Q17 4.5 17 11 Q17 15.5 11.5 19" stroke-width="1.7"/></svg>
<svg class="ic" style="left:117px;top:75px;width:18px;height:20px" viewBox="0 0 19 20"><path d="M17.5 2 V8 H11.5" stroke="#c6c6c6" stroke-width="1.7"/><path d="M17.2 7.8 Q14 3 9 3.5 Q2 4.5 2 11 Q2 15.5 7.5 19" stroke="#c6c6c6" stroke-width="1.7"/></svg>
<svg class="ic" style="left:159px;top:74px;width:21px;height:21px" viewBox="0 0 21 21"><path d="M8.5 5.5 V2.8 Q8.5 1 10.5 1 Q12.5 1 12.5 2.8 V5.5 H16.5 Q19 5.5 19 8 V10.5 H2 V8 Q2 5.5 4.5 5.5 Z" stroke-width="1.6"/><path d="M2.6 10.5 L2.2 19.8 H8.5 V15.5 M12 15.5 V19.8 H18.8 L18.4 10.5" stroke-width="1.6"/><path d="M3 10.5 H18" stroke="#e6862c" stroke-width="1.2"/></svg>
<div class="a" style="left:195px;top:75px;width:1px;height:20px;background:#dadada"></div>
<svg class="ic" style="left:211px;top:75px;width:21px;height:18px" viewBox="0 0 21 18"><rect x="1" y="1" width="19" height="16" rx="1.5" stroke-width="1.7"/><path d="M8.5 5.5 L13.5 9 L8.5 12.5 Z" stroke="#ec7a2a" stroke-width="1.5"/></svg>
<svg class="ic" style="left:246px;top:82px;width:10px;height:6px" viewBox="0 0 10 6"><path d="M1 1 L5 5 L9 1" stroke-width="1.5"/></svg>
<div class="a" style="left:267px;top:75px;width:1px;height:20px;background:#dadada"></div>
<svg class="ic" style="left:283px;top:76px;width:18px;height:18px" viewBox="0 0 18 18"><path d="M9 0.5 V17.5 M0.5 9 H17.5" stroke-width="1.8"/></svg>
<svg class="ic" style="left:325px;top:82px;width:10px;height:6px" viewBox="0 0 10 6"><path d="M1 1 L5 5 L9 1" stroke-width="1.5"/></svg>
<svg class="ic" style="left:354px;top:75px;width:20px;height:18px" viewBox="0 0 20 18"><rect x="1" y="1" width="18" height="16" rx="1.5" stroke-width="1.7"/><rect x="4" y="4" width="12" height="3.5" rx="1" stroke-width="1.4"/><rect x="4" y="10" width="7" height="3.5" rx="1" stroke-width="1.4"/></svg>
<svg class="ic" style="left:384px;top:82px;width:10px;height:6px" viewBox="0 0 10 6"><path d="M1 1 L5 5 L9 1" stroke-width="1.5"/></svg>
<svg class="ic" style="left:419px;top:75px;width:20px;height:20px" viewBox="0 0 20 20"><path d="M1.5 1 L3.2 2.6 L4.9 1 M7.5 1.5 H19" stroke="#4a86e8" stroke-width="1.5"/><rect x="1" y="5" width="18" height="14" rx="1.5" stroke-width="1.7"/><path d="M5 10 H15 M5 14 H11" stroke-width="1.5"/></svg>
<svg class="ic" style="left:449px;top:82px;width:10px;height:6px" viewBox="0 0 10 6"><path d="M1 1 L5 5 L9 1" stroke-width="1.5"/></svg>
<div class="a" style="left:475px;top:75px;width:1px;height:20px;background:#dadada"></div>

<div class="t" style="left:495px;top:78px;font-size:17px;color:#b8b8b8">字体</div>
<svg class="ic" style="left:608px;top:82px;width:10px;height:6px" viewBox="0 0 10 6"><path d="M1 1 L5 5 L9 1" stroke="#c4c4c4" stroke-width="1.5"/></svg>
<div class="t" style="left:644px;top:78px;font-size:17px;color:#b8b8b8">字号</div>
<svg class="ic" style="left:689px;top:82px;width:10px;height:6px" viewBox="0 0 10 6"><path d="M1 1 L5 5 L9 1" stroke="#c4c4c4" stroke-width="1.5"/></svg>
<svg class="ic" style="left:717px;top:75px;width:20px;height:19px" viewBox="0 0 20 19"><path d="M1 18 L7.5 3 L14 18 M3.5 12.5 H11.5" stroke="#bdbdbd" stroke-width="1.5"/><path d="M16 1 V7 M13 4 H19" stroke="#bdbdbd" stroke-width="1.3"/></svg>
<svg class="ic" style="left:761px;top:75px;width:20px;height:19px" viewBox="0 0 20 19"><path d="M1 18 L7.5 3 L14 18 M3.5 12.5 H11.5" stroke="#bdbdbd" stroke-width="1.5"/><path d="M13 3 H19" stroke="#bdbdbd" stroke-width="1.3"/></svg>
<div class="t" style="left:806px;top:76px;font-size:20px;font-weight:bold;color:#c0c0c0">B</div>
<svg class="ic" style="left:852px;top:76px;width:11px;height:17px" viewBox="0 0 11 17"><path d="M4 1 H10 M1 16 H7 M7 1 L4 16" stroke="#bdbdbd" stroke-width="1.4"/></svg>
<svg class="ic" style="left:883px;top:82px;width:10px;height:6px" viewBox="0 0 10 6"><path d="M1 1 L5 5 L9 1" stroke="#c4c4c4" stroke-width="1.5"/></svg>
<svg class="ic" style="left:913px;top:74px;width:21px;height:22px" viewBox="0 0 21 22"><path d="M4 14 L10.5 1.5 L17 14 M6.5 9.5 H14.5" stroke="#bdbdbd" stroke-width="1.5"/><rect x="1" y="17" width="19" height="4" rx="2" fill="#f0b6b6" stroke="none"/></svg>
<svg class="ic" style="left:948px;top:82px;width:10px;height:6px" viewBox="0 0 10 6"><path d="M1 1 L5 5 L9 1" stroke="#c4c4c4" stroke-width="1.5"/></svg>
<svg class="ic" style="left:976px;top:74px;width:23px;height:22px" viewBox="0 0 23 22"><path d="M6 14 L9.5 4 L17 9.5 L13 14" stroke="#bdbdbd" stroke-width="1.4"/><path d="M9.5 4 L11 1" stroke="#bdbdbd" stroke-width="1.4"/><rect x="1" y="16.5" width="21" height="5" rx="2.5" fill="#ecf2ae" stroke="#c9cf8a" stroke-width=".8"/></svg>
<svg class="ic" style="left:1012px;top:82px;width:10px;height:6px" viewBox="0 0 10 6"><path d="M1 1 L5 5 L9 1" stroke="#c4c4c4" stroke-width="1.5"/></svg>
<div class="a" style="left:1033px;top:75px;width:1px;height:20px;background:#dadada"></div>
<svg class="ic" style="left:1049px;top:76px;width:19px;height:16px" viewBox="0 0 19 16"><path d="M1 1 H18 M4 8 H15 M1 15 H18" stroke="#bdbdbd" stroke-width="1.5"/></svg>
<svg class="ic" style="left:1083px;top:82px;width:10px;height:6px" viewBox="0 0 10 6"><path d="M1 1 L5 5 L9 1" stroke="#c4c4c4" stroke-width="1.5"/></svg>
<svg class="ic" style="left:1114px;top:75px;width:20px;height:18px" viewBox="0 0 20 18"><circle cx="1.5" cy="1.5" r="1.3" fill="#bdbdbd" stroke="none"/><circle cx="1.5" cy="9" r="1.3" fill="#bdbdbd" stroke="none"/><circle cx="1.5" cy="16.5" r="1.3" fill="#bdbdbd" stroke="none"/><path d="M6 1.5 H19 M6 9 H19 M6 16.5 H19" stroke="#bdbdbd" stroke-width="1.5"/></svg>
<svg class="ic" style="left:1148px;top:82px;width:10px;height:6px" viewBox="0 0 10 6"><path d="M1 1 L5 5 L9 1" stroke="#c4c4c4" stroke-width="1.5"/></svg>
<svg class="ic" style="left:1177px;top:75px;width:20px;height:19px" viewBox="0 0 20 19"><path d="M4 1 V7 M1.5 3.5 L4 1 L6.5 3.5 M4 12 V18 M1.5 15.5 L4 18 L6.5 15.5" stroke="#a9c0e6" stroke-width="1.3"/><path d="M9 2 H19 M9 9.5 H19 M9 17 H19" stroke="#bdbdbd" stroke-width="1.5"/></svg>
<svg class="ic" style="left:1221px;top:75px;width:20px;height:19px" viewBox="0 0 20 19"><path d="M4 1 V7 M1.5 4.5 L4 7 L6.5 4.5 M4 12 V18 M1.5 14.5 L4 12 L6.5 14.5" stroke="#a9c0e6" stroke-width="1.3"/><path d="M9 2 H19 M9 9.5 H19 M9 17 H19" stroke="#bdbdbd" stroke-width="1.5"/></svg>
<svg class="ic" style="left:1264px;top:75px;width:20px;height:19px" viewBox="0 0 20 19"><path d="M4 1 V18 M1.5 3.5 L4 1 L6.5 3.5 M1.5 15.5 L4 18 L6.5 15.5" stroke="#a9c0e6" stroke-width="1.3"/><path d="M9 2 H19 M9 9.5 H19 M9 17 H19" stroke="#bdbdbd" stroke-width="1.5"/></svg>
<svg class="ic" style="left:1295px;top:82px;width:10px;height:6px" viewBox="0 0 10 6"><path d="M1 1 L5 5 L9 1" stroke="#c4c4c4" stroke-width="1.5"/></svg>
<svg class="ic" style="left:1329px;top:73px;width:15px;height:20px" viewBox="0 0 15 20"><path d="M1 1 H14 M7.5 5 V19.5 M3 9.5 L7.5 5 L12 9.5" stroke="#bdbdbd" stroke-width="1.5"/></svg>
<svg class="a" style="left:1364px;top:80px;width:9px;height:10px" viewBox="0 0 9 10"><path d="M0.5 0.5 V9.5 L8.5 5 Z" fill="#555"/></svg>


<!-- ===== RIGHT PANEL ===== -->
<svg class="ic" style="left:1437px;top:26px;width:16px;height:17px" viewBox="0 0 16 17"><path d="M0.5 1 H15.5 M0.5 8.5 H15.5 M0.5 16 H15.5" stroke="#333" stroke-width="1.6"/></svg>
<div class="t" style="left:1476px;top:17.5px;font-size:19px;font-weight:bold;color:#1a1a1a">WPS 灵犀</div>
<div class="a" style="left:1569px;top:14px;width:41px;height:23px;border-radius:6px;background:#efe9f8"></div>
<div class="t" style="left:1577px;top:18px;font-size:12.5px;color:#a354e0">限免</div>
<div class="t" style="left:1476px;top:42px;font-size:13px;color:#9a9a9a">内容由 AI 生成</div>
<svg class="ic" style="left:1794px;top:25px;width:23px;height:22px" viewBox="0 0 23 22"><path d="M5 17 Q1.5 14 1.5 10 Q1.5 2 10 2 Q18 2 18.5 9" stroke="#c4c4c4" stroke-width="1.4"/><path d="M3 15 L5 17.5 L7.5 16" stroke="#c4c4c4" stroke-width="1.3"/><circle cx="15" cy="15" r="6" stroke="#c4c4c4" stroke-width="1.4"/><path d="M15 12 V18 M12 15 H18" stroke="#c4c4c4" stroke-width="1.3"/></svg>
<div class="a" style="left:1834px;top:15px;width:69px;height:39px;border-radius:20px;background:#f5f5f5;box-shadow:0 0 0 1px #ececec"></div>
<svg class="a" style="left:1841px;top:31px;width:19px;height:5px" viewBox="0 0 19 5"><circle cx="2.2" cy="2.5" r="1.8" fill="#222"/><circle cx="9.5" cy="2.5" r="2.1" fill="#222"/><circle cx="16.8" cy="2.5" r="1.8" fill="#222"/></svg>
<div class="a" style="left:1867px;top:25px;width:1px;height:19px;background:#e2e2e2"></div>
<svg class="ic" style="left:1878px;top:27px;width:15px;height:14px" viewBox="0 0 15 14"><path d="M1 0.5 L14 13.5 M14 0.5 L1 13.5" stroke="#222" stroke-width="1.6"/></svg>

<div class="a" style="left:1525px;top:324px;width:33px;height:33px;border-radius:50%;background:conic-gradient(from 0deg,#5c5ee0,#2a7fe0 50deg,#1d9aa0 95deg,#4aa850 140deg,#d8a51c 190deg,#e8682c 225deg,#cf3a78 265deg,#9a2ed0 310deg,#6a4ee0 350deg,#5c5ee0);-webkit-mask:radial-gradient(circle,transparent 11.8px,#000 12.4px);mask:radial-gradient(circle,transparent 11.8px,#000 12.4px)"></div>
<div class="a" style="left:1529px;top:328px;width:25px;height:25px;border-radius:50%;background:#fff"></div>
<div class="a" style="left:1535.5px;top:337px;width:3.4px;height:7px;border-radius:2px;background:#14102e"></div>
<div class="a" style="left:1544.3px;top:337px;width:3.4px;height:7px;border-radius:2px 1px 1px 2px;background:#14102e"></div>
<div class="t" style="left:1569px;top:329px;font-size:26px;letter-spacing:1.2px;font-weight:bold;color:#161616;-webkit-text-stroke:0.4px #161616">WPS灵犀帮你创作</div>

<div class="a" style="left:1430px;top:419px;width:463px;height:159px;border-radius:22px;background:#fff;box-shadow:0 0 0 1px #ececec"></div>
<div class="t" style="left:1449px;top:446px;font-size:19px;color:#a8a8a8">输入你的创作要求</div>
<svg class="ic" style="left:1456px;top:532px;width:20px;height:20px" viewBox="0 0 20 20"><ellipse cx="10" cy="10" rx="9" ry="4.6" transform="rotate(45 10 10)" stroke="#2a2a2a" stroke-width="1.6"/><ellipse cx="10" cy="10" rx="9" ry="4.6" transform="rotate(-45 10 10)" stroke="#2a2a2a" stroke-width="1.6"/><circle cx="10" cy="10" r="1.8" fill="#2a2a2a" stroke="none"/></svg>
<div class="a" style="left:1835px;top:520px;width:43px;height:43px;border-radius:50%;background:#f4f4f4"></div>
<svg class="a" style="left:1847px;top:532px;width:20px;height:19px" viewBox="0 0 20 19"><path d="M1 1 L19 9.5 L1 18 L4.5 9.5 Z" fill="#d9d9d9"/></svg>

<div class="t" style="left:1444px;top:640px;font-size:16px;font-weight:bold;color:#6a6a6a">试试以下技能</div>

<div class="a" style="left:1429px;top:677px;width:464px;height:64px;border-radius:16px;background:#fff;box-shadow:0 2px 6px rgba(0,0,0,.06),0 0 0 1px #ededed"></div>
<svg class="ic" style="left:1447px;top:698px;width:21px;height:21px" viewBox="0 0 21 21"><path d="M2.5 7 L5 4.5 L15 14.5 L12.5 17 Z" stroke="#e07a2e" stroke-width="1.4"/><path d="M4.8 9.3 L7.3 6.8" stroke="#e07a2e" stroke-width="1.3"/><path d="M15.50 0.40 Q16.24 4.26 20.10 5.00 Q16.24 5.74 15.50 9.60 Q14.76 5.74 10.90 5.00 Q14.76 4.26 15.50 0.40 Z M3.20 14.60 Q3.63 16.87 5.90 17.30 Q3.63 17.73 3.20 20.00 Q2.77 17.73 0.50 17.30 Q2.77 16.87 3.20 14.60 Z" fill="#e07a2e" stroke="none"/></svg>
<div class="t" style="left:1480px;top:701px;font-size:17.5px;font-weight:bold;color:#1f1f1f">润色标题</div>
<div class="t" style="left:1562px;top:701px;font-size:17.5px;color:#8a8a8a">润色一下封面标题</div>

<div class="a" style="left:1429px;top:758px;width:464px;height:64px;border-radius:16px;background:#fff;box-shadow:0 2px 6px rgba(0,0,0,.06),0 0 0 1px #ededed"></div>
<svg class="ic" style="left:1447px;top:780px;width:22px;height:22px" viewBox="0 0 22 22"><path d="M8.5 17.5 H2.5 Q1.5 17.5 1.5 16.5 V3.5 Q1.5 2.5 2.5 2.5 H17.5 Q18.5 2.5 18.5 3.5 V8" stroke="#e07a2e" stroke-width="1.4"/><path d="M5.5 14 V6 H8.8 Q11.3 6 11.3 8.3 Q11.3 10.5 8.8 10.5 H5.5" stroke="#e07a2e" stroke-width="1.4"/><path d="M16.00 9.50 Q16.80 13.70 21.00 14.50 Q16.80 15.30 16.00 19.50 Q15.20 15.30 11.00 14.50 Q15.20 13.70 16.00 9.50 Z M10.30 16.70 Q10.72 18.88 12.90 19.30 Q10.72 19.72 10.30 21.90 Q9.88 19.72 7.70 19.30 Q9.88 18.88 10.30 16.70 Z" fill="#e07a2e" stroke="none"/></svg>
<div class="t" style="left:1480px;top:782px;font-size:17.5px;font-weight:bold;color:#1f1f1f">更换模板</div>
<div class="t" style="left:1562px;top:782px;font-size:17.5px;color:#8a8a8a">更换适合主题的模板</div>

<div class="a" style="left:1429px;top:839px;width:464px;height:64px;border-radius:16px;background:#fff;box-shadow:0 2px 6px rgba(0,0,0,.06),0 0 0 1px #ededed"></div>
<svg class="ic" style="left:1447px;top:861px;width:22px;height:22px" viewBox="0 0 22 22"><path d="M8.5 17.5 H2.5 Q1.5 17.5 1.5 16.5 V3.5 Q1.5 2.5 2.5 2.5 H17.5 Q18.5 2.5 18.5 3.5 V8" stroke="#e07a2e" stroke-width="1.4"/><path d="M5.5 14 V6 H8.8 Q11.3 6 11.3 8.3 Q11.3 10.5 8.8 10.5 H5.5" stroke="#e07a2e" stroke-width="1.4"/><path d="M16.00 9.50 Q16.80 13.70 21.00 14.50 Q16.80 15.30 16.00 19.50 Q15.20 15.30 11.00 14.50 Q15.20 13.70 16.00 9.50 Z M10.30 16.70 Q10.72 18.88 12.90 19.30 Q10.72 19.72 10.30 21.90 Q9.88 19.72 7.70 19.30 Q9.88 18.88 10.30 16.70 Z" fill="#e07a2e" stroke="none"/></svg>
<div class="t" style="left:1480px;top:863px;font-size:17.5px;font-weight:bold;color:#1f1f1f">美化PPT</div>
<div class="t" style="left:1561px;top:863px;font-size:17.5px;color:#8a8a8a">更换文档配色与字体</div>


<!-- ===== AI + layout buttons ===== -->
<div class="a" style="left:330px;top:316px;width:36px;height:37px;border-radius:7px;background:#fff;box-shadow:0 0 0 1px #e6e6e6"></div>
<svg class="a" style="left:337px;top:326px;width:22px;height:16px" viewBox="0 0 22 16"><path d="M0.5 15.25 L7.6 1 H13.4 L6.75 15.25 Z" fill="url(#wg1)" stroke="url(#wg1)" stroke-width=".8" stroke-linejoin="round"/><path d="M11.3 7.3 H16.75 L21.2 15.25 H16.3 Z" fill="url(#wg2)" stroke="url(#wg2)" stroke-width=".8" stroke-linejoin="round"/></svg>
<div class="a" style="left:375px;top:316px;width:139px;height:39px;border-radius:7px;background:#fff;box-shadow:0 0 0 1px #e6e6e6"></div>
<svg class="ic" style="left:396px;top:325px;width:20px;height:19px" viewBox="0 0 20 19"><rect x="1" y="1" width="18" height="17" rx="1" stroke="#333" stroke-width="1.6"/><rect x="4" y="4.5" width="12" height="4" rx="1.5" stroke="#333" stroke-width="1.4"/><rect x="4" y="11" width="9" height="4" rx="1.5" stroke="#333" stroke-width="1.4"/></svg>
<div class="t" style="left:423px;top:327.5px;font-size:18px;letter-spacing:-0.2px;color:#2a2a2a">更换版式</div>

<!-- ===== Banner ===== -->
<div class="a" style="left:436px;top:132px;width:529px;height:59px;border-radius:9px;background:#edf4fe;border:1px solid #5a93e6;box-shadow:0 10px 28px rgba(0,0,0,.10)"></div>
<svg class="a" style="left:463px;top:148px;width:24px;height:24px" viewBox="0 0 24 24"><circle cx="12" cy="12" r="11.5" fill="#2f6fdf"/><circle cx="12" cy="6.8" r="1.7" fill="#fff"/><rect x="10.4" y="9.6" width="3.2" height="8.8" rx="1" fill="#fff"/></svg>
<div class="t" style="left:497px;top:153px;font-size:17.5px;letter-spacing:-0.15px;color:#333">仅剩 2 次体验，开通会员解锁无限次使用</div>
<div class="t" style="left:829px;top:153px;font-size:17.5px;letter-spacing:-0.15px;color:#3b78d8">去看看</div>
<svg class="ic" style="left:913px;top:154px;width:15px;height:15px" viewBox="0 0 15 15"><path d="M1 1 L14 14 M14 1 L1 14" stroke="#666" stroke-width="1.6"/></svg>

<!-- ===== Right vertical toolbar ===== -->
<div class="a" style="left:1323px;top:129px;width:67px;height:449px;border-radius:8px;background:#fff;box-shadow:0 0 0 1px #e8e8e8,0 1px 3px rgba(0,0,0,.05)"></div>
<svg class="ic" style="left:1346px;top:142px;width:20px;height:20px" viewBox="0 0 20 20"><path d="M8.3 1.5 H11.7 L12.3 4 L14.5 5.2 L17 4.4 L18.7 7.3 L16.8 9.1 V10.9 L18.7 12.7 L17 15.6 L14.5 14.8 L12.3 16 L11.7 18.5 H8.3 L7.7 16 L5.5 14.8 L3 15.6 L1.3 12.7 L3.2 10.9 V9.1 L1.3 7.3 L3 4.4 L5.5 5.2 L7.7 4 Z" stroke="#333" stroke-width="1.4"/><circle cx="10" cy="10" r="2.8" stroke="#333" stroke-width="1.4"/></svg>
<div class="t" style="left:1340px;top:174px;font-size:16.5px;color:#2a2a2a">格式</div>
<svg class="ic" style="left:1347px;top:215px;width:20px;height:20px" viewBox="0 0 20 20"><path d="M10 18 H3 Q1.5 18 1.5 16.5 V3 Q1.5 1.5 3 1.5 H14 Q15.5 1.5 15.5 3 V9" stroke="#333" stroke-width="1.5"/><path d="M5 6 H12 M5 10 H9" stroke="#333" stroke-width="1.4"/><path d="M15 11 L16 14 L19 15 L16 16 L15 19 L14 16 L11 15 L14 14 Z" fill="#333" stroke="none"/></svg>
<div class="t" style="left:1340px;top:247px;font-size:16.5px;color:#2a2a2a">模板</div>
<svg class="ic" style="left:1346px;top:288px;width:20px;height:19px" viewBox="0 0 20 19"><path d="M10 1.5 Q18.5 1.5 18.5 9 Q18.5 12.5 15 12.5 H13 Q11 12.5 11.5 14.5 Q12.5 17.5 10 17.5 Q1.5 17.5 1.5 9.5 Q1.5 1.5 10 1.5 Z" stroke="#333" stroke-width="1.5"/><circle cx="6" cy="8" r="1.4" fill="#e0782a" stroke="none"/><circle cx="10" cy="5.5" r="1.4" fill="#333" stroke="none"/><circle cx="14" cy="8" r="1.4" fill="#333" stroke="none"/><circle cx="6" cy="12" r="1.3" fill="#333" stroke="none"/></svg>
<div class="t" style="left:1340px;top:320px;font-size:16.5px;color:#2a2a2a">颜色</div>
<svg class="ic" style="left:1348px;top:362px;width:17px;height:18px" viewBox="0 0 17 18"><path d="M1 17.5 L8.5 1 L16 17.5 M4 11.5 H13" stroke="#333" stroke-width="1.6"/></svg>
<div class="t" style="left:1340px;top:392px;font-size:16.5px;color:#2a2a2a">字体</div>
<svg class="ic" style="left:1346px;top:433px;width:22px;height:21px" viewBox="0 0 22 21"><path d="M9.5 1.5 L11.8 6.5 L17 7.2 L13.2 10.8 L14 16 L9.5 13.5 L5 16 L5.8 10.8 L2 7.2 L7.2 6.5 Z" stroke="#333" stroke-width="1.5"/><path d="M13 15 H20 M15 18 H20 M15 12 H20" stroke="#4a7fd8" stroke-width="1.4"/></svg>
<div class="t" style="left:1340px;top:465px;font-size:16.5px;color:#2a2a2a">动画</div>
<div class="a" style="left:1330px;top:495px;width:54px;height:1px;background:#efefef"></div>
<svg class="ic" style="left:1346px;top:517px;width:20px;height:20px" viewBox="0 0 20 20"><path d="M2 2 H18 V15 H7 L3 18.5 V15 H2 Z" stroke="#333" stroke-width="1.5"/><path d="M6 7 H14 M6 10.5 H11" stroke="#333" stroke-width="1.4"/></svg>
<div class="t" style="left:1340px;top:549px;font-size:16.5px;color:#2a2a2a">评论</div>

<!-- ===== Notes & status bar ===== -->
<svg class="ic" style="left:133px;top:1112px;width:18px;height:18px" viewBox="0 0 18 18"><path d="M9 0.5 V17.5 M0.5 9 H17.5" stroke="#333" stroke-width="1.6"/></svg>
<div class="t" style="left:302px;top:1116.5px;font-size:19px;letter-spacing:0.25px;color:#a3a3a3">单击此处添加演讲备注或使用</div>
<div class="a" style="left:558px;top:1109px;width:115px;height:31px;border-radius:5px;background:#f7f7f7"></div>
<svg class="ic" style="left:567px;top:1115px;width:19px;height:19px" viewBox="0 0 19 19"><path d="M9 15 H2.5 Q1.5 15 1.5 14 V2.5 Q1.5 1.5 2.5 1.5 H13.5 Q14.5 1.5 14.5 2.5 V7" stroke="#666" stroke-width="1.5"/><path d="M5 6 H10 M5 9.5 H8" stroke="#666" stroke-width="1.4"/><path d="M14 9 L15 12 L18 13 L15 14 L14 17 L13 14 L10 13 L13 12 Z" fill="#666" stroke="none"/></svg>
<div class="t" style="left:591px;top:1117px;font-size:18px;color:#555">AI 演讲稿</div>
<div class="t" style="left:33px;top:1171px;font-size:18px;letter-spacing:0.6px;color:#707070">幻灯片 8/41</div>

<svg class="ic" style="left:801px;top:1170px;width:20px;height:19px" viewBox="0 0 20 19"><rect x="1" y="1" width="7" height="7" rx="1.5" stroke="#555" stroke-width="1.5"/><rect x="12" y="1" width="7" height="7" rx="1.5" stroke="#555" stroke-width="1.5"/><rect x="1" y="11" width="7" height="7" rx="1.5" stroke="#555" stroke-width="1.5"/><rect x="12" y="11" width="7" height="7" rx="1.5" stroke="#555" stroke-width="1.5"/></svg>
<svg class="ic" style="left:849px;top:1170px;width:21px;height:19px" viewBox="0 0 21 19"><path d="M9 17.5 H2 Q1 17.5 1 16.5 V2.5 Q1 1.5 2 1.5 H17 Q18 1.5 18 2.5 V7" stroke="#555" stroke-width="1.5"/><path d="M4 5 H7 M9 5 H12 M4 9 V11" stroke="#555" stroke-width="1.3"/><path d="M11 17.5 L12 14 L18 8 L20 10 L14 16 Z" stroke="#555" stroke-width="1.4"/></svg>
<div class="a" style="left:889px;top:1160px;width:38px;height:38px;border-radius:6px;background:#dcdcdc"></div>
<svg class="ic" style="left:898px;top:1170px;width:22px;height:20px" viewBox="0 0 22 20"><path d="M10 17 H2 Q1 17 1 16 V2.5 Q1 1.5 2 1.5 H16 Q17 1.5 17 2.5 V10" stroke="#555" stroke-width="1.5"/><path d="M11 16 Q15.5 11.5 20.5 16 Q15.5 20.5 11 16 Z" stroke="#555" stroke-width="1.3"/><circle cx="15.8" cy="16" r="1.4" fill="#555" stroke="none"/></svg>
<svg class="ic" style="left:947px;top:1170px;width:21px;height:18px" viewBox="0 0 21 18"><rect x="1" y="1" width="19" height="16" rx="2" stroke="#555" stroke-width="1.5"/><path d="M5 7 H7 M9 7 H11 M13 7 H16 M5 11.5 H16" stroke="#555" stroke-width="1.4"/></svg>
<svg class="ic" style="left:995px;top:1169px;width:21px;height:21px" viewBox="0 0 21 21"><circle cx="9.5" cy="9.5" r="8.5" stroke="#333" stroke-width="1.5"/><path d="M1 9.5 H18 M9.5 1 Q4.5 9.5 9.5 18 M9.5 1 Q14.5 9.5 9.5 18" stroke="#333" stroke-width="1.3"/><circle cx="15.5" cy="15.5" r="5" fill="#22a05a" stroke="#fff" stroke-width="1"/><path d="M13.2 15.6 L15 17.2 L17.8 14" stroke="#fff" stroke-width="1.4"/></svg>
<div class="a" style="left:1031px;top:1169px;width:1px;height:20px;background:#dadada"></div>
<svg class="ic" style="left:1050px;top:1178px;width:19px;height:2px" viewBox="0 0 19 2"><path d="M0.5 1 H18.5" stroke="#444" stroke-width="1.6"/></svg>
<div class="t" style="left:1100px;top:1171px;font-size:18px;color:#707070">53%</div>
<svg class="ic" style="left:1165px;top:1170px;width:18px;height:18px" viewBox="0 0 18 18"><path d="M9 0.5 V17.5 M0.5 9 H17.5" stroke="#444" stroke-width="1.6"/></svg>
<svg class="ic" style="left:1208px;top:1169px;width:20px;height:20px" viewBox="0 0 20 20"><path d="M1 6 V1 H6 M14 1 H19 V6 M19 14 V19 H14 M6 19 H1 V14" stroke="#555" stroke-width="1.5"/><rect x="5.5" y="5.5" width="9" height="9" rx="1" stroke="#555" stroke-width="1.5"/></svg>
<svg class="ic" style="left:1252px;top:1169px;width:21px;height:21px" viewBox="0 0 21 21"><path d="M1 6 V1 H6 M15 1 H20 V6 M20 15 V20 H15 M6 20 H1 V15" stroke="#555" stroke-width="1.5"/><path d="M12.5 8.5 L17 4 M14 4 H17 V7 M8.5 12.5 L4 17 M4 14 V17 H7" stroke="#4a7fd8" stroke-width="1.4"/></svg>
<svg class="a" style="left:1292px;top:1168px;width:21px;height:22px" viewBox="0 0 21 22"><ellipse cx="10.5" cy="9" rx="8.5" ry="7.5" fill="#fff" stroke="#333" stroke-width="1.4"/><circle cx="7.5" cy="8.5" r="1" fill="#333"/><circle cx="13.5" cy="8.5" r="1" fill="#333"/><path d="M8.5 11.5 Q10.5 13 12.5 11.5" fill="none" stroke="#333" stroke-width="1"/><path d="M2.5 14 L10.5 20.5 L18.5 14 L17 18 L10.5 21.5 L4 18 Z" fill="#3e6fd6"/></svg>
<div class="a" style="left:1330px;top:1167px;width:28px;height:24px;border-radius:6px;background:#e8711f"></div>
<svg class="a" style="left:1339px;top:1173px;width:11px;height:12px" viewBox="0 0 11 12"><path d="M1 1 V11 L10 6 Z" fill="#fff" stroke="#fff" stroke-width="1" stroke-linejoin="round"/></svg>
<svg class="ic" style="left:1370px;top:1176px;width:11px;height:7px" viewBox="0 0 11 7"><path d="M1 1 L5.5 5.5 L10 1" stroke="#444" stroke-width="1.5"/></svg>

<!-- window frame -->
<div class="a" style="left:0;top:0;width:1920px;height:1px;background:#fafafa"></div><div class="a" style="left:0;top:1px;width:1920px;height:1px;background:#e6e6e6"></div>
<div class="a" style="left:0;top:1198px;width:1920px;height:2px;background:#2b2b2b"></div>
<svg class="a" style="left:0;top:1188px;width:10px;height:12px" viewBox="0 0 10 12"><path d="M0 0 V12 H10 Q0 12 0 0 Z" fill="#2b2b2b"/></svg>
<svg class="a" style="left:1910px;top:1188px;width:10px;height:12px" viewBox="0 0 10 12"><path d="M10 0 V12 H0 Q10 12 10 0 Z" fill="#2b2b2b"/></svg>

</body></html>
